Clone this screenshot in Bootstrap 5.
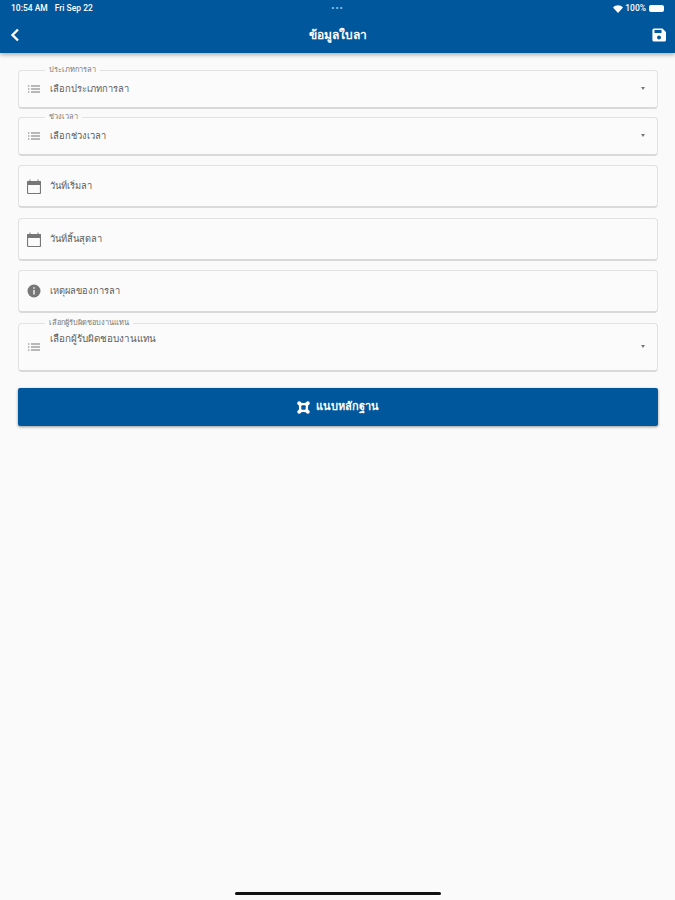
<!DOCTYPE html>
<html lang="th">
<head>
    <meta charset="UTF-8">
    <meta name="viewport" content="width=device-width, initial-scale=1.0">
    <title>ข้อมูลใบลา</title>
    <link href="https://cdn.jsdelivr.net/npm/bootstrap@5.3.0/dist/css/bootstrap.min.css" rel="stylesheet">
    <style>
        html, body { height: 100%; }
        body {
            background: #fafafa;
            font-family: Roboto, "Noto Sans", "Liberation Sans", sans-serif;
            color: #555;
            overflow: hidden;
        }
        .app-shell { height: 900px; }
        .app-header {
            background: #01579b;
            color: #fff;
            height: 53px;
            box-shadow: 0 2px 4px rgba(0, 0, 0, .3);
        }
        .status-row { height: 17px; padding: 0 11px; font-size: 8.5px; font-weight: 500; }
        .status-side { flex: 1 1 0; gap: 7px; }
        .status-right { gap: 2px; }
        .status-dots { color: #9cc3e6; letter-spacing: 1px; font-size: 9px; line-height: 1; }
        .battery-shape { width: 15px; height: 7px; margin-left: 1px; background: #fff; border-radius: 2px; }
        .title-row { height: 36px; padding: 0 9px 0 10px; }
        .page-title { font-size: 12px; font-weight: 700; }
        .form-area { padding: 14px 17px 0 18px; }
        .leave-field {
            border: 1px solid #e2e2e2;
            border-bottom: 2px solid #d9d9d9;
            border-radius: 4px;
            padding: 0 12px 0 8px;
            background: #fbfbfb;
            margin: 0;
            min-width: 0;
        }
        .leave-field legend {
            float: none;
            width: auto;
            margin: 0 0 0 18px;
            padding: 0 4px;
            font-size: 7.4px;
            line-height: 6px;
            color: #777;
        }
        .gap-5 { margin-bottom: 5px; }
        .gap-7 { margin-bottom: 7px; }
        .gap-9 { margin-bottom: 9px; }
        .gap-10 { margin-bottom: 10px; }
        .gap-16 { margin-bottom: 16px; }
        .field-select { height: 37px; margin-top: -3px; }
        .field-tall { height: 47px; margin-top: -3px; }
        .field-plain { height: 43px; }
        .field-text { font-size: 9.3px; color: #5c5c5c; margin-left: 9px; }
        .field-text-top { margin-bottom: 14px; font-size: 9.8px; }
        .icon-wrap { width: 14px; flex: none; }
        .caret-shape {
            width: 0;
            height: 0;
            margin-left: auto;
            border-left: 2.5px solid transparent;
            border-right: 2.5px solid transparent;
            border-top: 3px solid #777;
        }
        .proof-btn {
            background: #01579b;
            color: #fff;
            height: 38px;
            border: 0;
            border-radius: 2px;
            font-size: 11px;
            font-weight: 700;
            gap: 6px;
            box-shadow: 0 1px 3px rgba(0, 0, 0, .4);
        }
        .proof-btn:hover { background: #01579b; color: #fff; }
        .home-bar { width: 206px; height: 3px; background: #111; border-radius: 2px; margin-bottom: 5px; }
    </style>
</head>
<body>
    <div class="app-shell d-flex flex-column">

        <!-- Header -->
        <header class="app-header flex-shrink-0">
            <div class="status-row d-flex align-items-center justify-content-between">
                <span class="status-side d-flex"><span>10:54 AM</span><span>Fri Sep 22</span></span>
                <span class="status-dots">•••</span>
                <span class="status-side status-right d-flex align-items-center justify-content-end">
                    <svg width="10" height="8" viewBox="0 0 10 8"><path d="M0 2.5C2.8-.4 7.2-.4 10 2.5L5 8z" fill="#fff"/></svg>
                    <span>100%</span>
                    <span class="battery-shape"></span>
                </span>
            </div>
            <div class="title-row d-flex align-items-center justify-content-between">
                <svg width="14" height="14" viewBox="0 0 14 14"><path d="M8 1.5 2.5 7 8 12.5" fill="none" stroke="#fff" stroke-width="2.4"/></svg>
                <span class="page-title">ข้อมูลใบลา</span>
                <svg width="14" height="14" viewBox="0 0 14 14"><path d="M2 0.5h8.5L14 4v8a1.6 1.6 0 0 1-1.6 1.6H2A1.6 1.6 0 0 1 .4 12V2A1.6 1.6 0 0 1 2 .5z" fill="#fff"/><rect x="2.5" y="2" width="7" height="3" fill="#01579b"/><circle cx="7" cy="9.5" r="2" fill="#01579b"/></svg>
            </div>
        </header>

        <!-- Form -->
        <main class="form-area d-flex flex-column flex-grow-1">
            <fieldset class="leave-field gap-5">
                <legend>ประเภทการลา</legend>
                <div class="field-select d-flex align-items-center">
                    <span class="icon-wrap d-flex"><svg width="14" height="10" viewBox="0 0 14 10"><path d="M1 2h1.4M1 5h1.4M1 8h1.4M4 2h9M4 5h9M4 8h9" stroke="#777" stroke-width="1.2"/></svg></span>
                    <span class="field-text">เลือกประเภทการลา</span>
                    <span class="caret-shape"></span>
                </div>
            </fieldset>
            <fieldset class="leave-field gap-9">
                <legend>ช่วงเวลา</legend>
                <div class="field-select d-flex align-items-center">
                    <span class="icon-wrap d-flex"><svg width="14" height="10" viewBox="0 0 14 10"><path d="M1 2h1.4M1 5h1.4M1 8h1.4M4 2h9M4 5h9M4 8h9" stroke="#777" stroke-width="1.2"/></svg></span>
                    <span class="field-text">เลือกช่วงเวลา</span>
                    <span class="caret-shape"></span>
                </div>
            </fieldset>
            <div class="leave-field field-plain d-flex align-items-center gap-10">
                <span class="icon-wrap d-flex"><svg width="14" height="15" viewBox="0 0 14 15"><path d="M1.5 2.5h11a1 1 0 0 1 1 1v10a1 1 0 0 1-1 1h-11a1 1 0 0 1-1-1v-10a1 1 0 0 1 1-1z" fill="none" stroke="#777" stroke-width="1.2"/><path d="M.5 2.5h13v3H.5zM3 .5v2M11 .5v2" fill="#777" stroke="#777"/></svg></span>
                <span class="field-text">วันที่เริ่มลา</span>
            </div>
            <div class="leave-field field-plain d-flex align-items-center gap-9">
                <span class="icon-wrap d-flex"><svg width="14" height="15" viewBox="0 0 14 15"><path d="M1.5 2.5h11a1 1 0 0 1 1 1v10a1 1 0 0 1-1 1h-11a1 1 0 0 1-1-1v-10a1 1 0 0 1 1-1z" fill="none" stroke="#777" stroke-width="1.2"/><path d="M.5 2.5h13v3H.5zM3 .5v2M11 .5v2" fill="#777" stroke="#777"/></svg></span>
                <span class="field-text">วันที่สิ้นสุดลา</span>
            </div>
            <div class="leave-field field-plain d-flex align-items-center gap-7">
                <span class="icon-wrap d-flex"><svg width="14" height="14" viewBox="0 0 14 14"><circle cx="7" cy="7" r="6.5" fill="#777"/><path d="M7 6v4.5M7 3.2v1.5" stroke="#fbfbfb" stroke-width="1.4"/></svg></span>
                <span class="field-text">เหตุผลของการลา</span>
            </div>
            <fieldset class="leave-field gap-16">
                <legend>เลือกผู้รับผิดชอบงานแทน</legend>
                <div class="field-tall d-flex align-items-center">
                    <span class="icon-wrap d-flex"><svg width="14" height="10" viewBox="0 0 14 10"><path d="M1 2h1.4M1 5h1.4M1 8h1.4M4 2h9M4 5h9M4 8h9" stroke="#777" stroke-width="1.2"/></svg></span>
                    <span class="field-text field-text-top">เลือกผู้รับผิดชอบงานแทน</span>
                    <span class="caret-shape"></span>
                </div>
            </fieldset>
            <button type="button" class="btn proof-btn d-flex align-items-center justify-content-center w-100 p-0">
                <svg width="13" height="13" viewBox="0 0 13 13"><path d="M2 1Q6.5 3 11 1 12.500 1 12 2 10 6.500 12 11 12.500 12.500 11 12 6.500 10 2 12 .5 12.500 1 11 3 6.500 1 2 .5 .5 2 1z" fill="#fff"/><circle cx="2.200" cy="2.200" r="1.900" fill="#fff"/><circle cx="10.800" cy="2.200" r="1.900" fill="#fff"/><circle cx="2.200" cy="10.800" r="1.900" fill="#fff"/><circle cx="10.800" cy="10.800" r="1.900" fill="#fff"/><rect x="4.300" y="4.300" width="4.400" height="4.400" rx="1" fill="#01579b"/></svg>
                <span>แนบหลักฐาน</span>
            </button>
        </main>

        <div class="d-flex justify-content-center flex-shrink-0">
            <div class="home-bar"></div>
        </div>
    </div>

    <script src="https://cdn.jsdelivr.net/npm/bootstrap@5.3.0/dist/js/bootstrap.bundle.min.js"></script>
</body>
</html>
